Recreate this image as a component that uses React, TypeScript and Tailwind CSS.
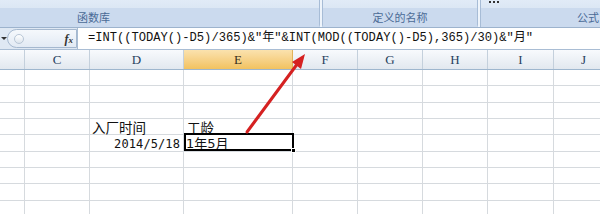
import React from "react";

const cols = [
  { name: "", w: 25 },
  { name: "C", w: 65 },
  { name: "D", w: 94 },
  { name: "E", w: 109 },
  { name: "F", w: 65 },
  { name: "G", w: 65 },
  { name: "H", w: 65 },
  { name: "I", w: 66 },
  { name: "J", w: 60 },
];
const rowH = [16, 17, 16, 16, 17, 16, 16, 17, 16];

export default function App() {
  return (
    <div className="relative w-[600px] h-[214px] overflow-hidden bg-white" style={{ fontFamily: '"Liberation Sans", "Noto Sans CJK SC", sans-serif' }}>
      {/* Ribbon */}
      <div className="flex h-[28px] bg-[#c4d5ea] border-b border-[#9db3cd]">
        <div className="w-[320px] flex flex-col bg-gradient-to-b from-[#e1ebf7] to-[#cfdcee] border-r border-[#a7bcd6] rounded-br-[3px]">
          <div className="h-[8px]" />
          <div className="flex-1 flex items-center pl-[77px] text-[11px] text-[#4a6a96] bg-[#cbdaee]" style={{ fontFamily: '"Noto Sans CJK SC", sans-serif' }}>函数库</div>
        </div>
        <div className="w-[2px] bg-[#eef4fb]" />
        <div className="w-[156px] flex flex-col bg-gradient-to-b from-[#e1ebf7] to-[#cfdcee] border-x border-[#a7bcd6] rounded-b-[3px]">
          <div className="h-[8px]" />
          <div className="flex-1 flex items-center justify-center text-[11px] text-[#4a6a96] bg-[#cbdaee]" style={{ fontFamily: '"Noto Sans CJK SC", sans-serif' }}>定义的名称</div>
        </div>
        <div className="w-[2px] bg-[#eef4fb]" />
        <div className="flex-1 flex flex-col bg-gradient-to-b from-[#e1ebf7] to-[#cfdcee] border-l border-[#a7bcd6]">
          <div className="h-[8px] flex items-start pl-[8px] gap-[2px] pt-[1px]">
            <div className="w-[2px] h-[2px] bg-[#333]" />
            <div className="w-[2px] h-[2px] bg-[#333]" />
            <div className="w-[2px] h-[2px] bg-[#333]" />
          </div>
          <div className="flex-1 flex items-center pl-[96px] text-[11px] text-[#4a6a96] bg-[#cbdaee]" style={{ fontFamily: '"Noto Sans CJK SC", sans-serif' }}>公式</div>
        </div>
      </div>

      {/* Formula bar */}
      <div className="flex h-[22px] bg-[#dfe8f3] border-b border-[#a9bdd4]">
        <div className="w-[7px] flex items-center justify-center">
          <svg width="6" height="4" viewBox="0 0 6 4"><path d="M0 0 L6 0 L3 3 Z" fill="#333" /></svg>
        </div>
        <div className="w-[70px] my-[1px] flex items-center justify-between rounded-l-[10px] border border-[#a5b8cf] bg-gradient-to-b from-[#f5f8fc] to-[#e2eaf4] pl-[6px] pr-[3px]">
          <div className="w-[10px] h-[10px] rounded-full border border-[#b8c6d6] bg-gradient-to-b from-white to-[#dde5ee]" />
          <span className="text-[12px] italic text-[#333] font-bold" style={{ fontFamily: '"Liberation Serif", serif' }}>f<span className="text-[9px]">x</span></span>
        </div>
        <div className="flex-1 bg-white border-l border-[#a9bdd4] flex items-center pl-[10px] text-[12.1px] text-[#111] whitespace-nowrap" style={{ fontFamily: '"Liberation Mono", "Noto Sans CJK SC", monospace' }}>
          =INT((TODAY()-D5)/365)&amp;″年″&amp;INT(MOD((TODAY()-D5),365)/30)&amp;″月″
        </div>
      </div>

      {/* Column headers */}
      <div className="flex h-[20px] border-b border-[#9eb6ce]">
        {cols.map((c, i) => (
          <div
            key={i}
            className={
              "shrink-0 flex items-center justify-center border-r text-[13px] " +
              (c.name === "E"
                ? "bg-gradient-to-b from-[#fbe2ae] to-[#f2c25f] border-[#e1b35a] text-[#3a3020]"
                : "bg-gradient-to-b from-[#f8fafd] to-[#e2e8ef] border-[#c4d0dc] text-[#27405e]")
            }
            style={{ width: c.w, fontFamily: '"Liberation Serif", serif' }}
          >
            {c.name}
          </div>
        ))}
      </div>

      {/* Grid */}
      <div className="flex flex-col">
        {rowH.map((h, r) => (
          <div key={r} className="flex border-b border-[#d6dade]" style={{ height: h }}>
            {cols.map((c, i) => {
              let content: React.ReactNode = null;
              let cls = "";
              if (r === 3 && c.name === "D") {
                content = <span className="pl-[2px] text-[13.5px] leading-none">入厂时间</span>;
                cls = "items-end";
              }
              if (r === 3 && c.name === "E") {
                content = <span className="pl-[3px] text-[13.5px] leading-none">工龄</span>;
                cls = "items-end";
              }
              if (r === 4 && c.name === "D") {
                content = (
                  <span className="ml-auto pr-[3px] text-[12px] leading-none" style={{ fontFamily: '"DejaVu Sans Mono", monospace', letterSpacing: "0.1px" }}>
                    2014/5/18
                  </span>
                );
                cls = "items-end pb-[1px]";
              }
              if (r === 4 && c.name === "E") {
                content = (
                  <span className="pl-[2px] text-[13px] leading-none" style={{ fontFamily: '"DejaVu Sans", "Noto Sans CJK SC", sans-serif' }}>
                    1年5月
                  </span>
                );
                cls = "items-end pb-[1px]";
              }
              return (
                <div
                  key={i}
                  className={"shrink-0 flex border-r border-[#d6dade] text-[#111] overflow-visible whitespace-nowrap " + cls}
                  style={{ width: c.w, fontFamily: '"Noto Sans CJK SC", sans-serif' }}
                >
                  {content}
                </div>
              );
            })}
          </div>
        ))}
      </div>

      {/* Selection */}
      <div className="absolute left-[184px] top-[133px] w-[110px] h-[18px] border-2 border-black pointer-events-none">
        <div className="absolute right-[-4px] bottom-[-4px] w-[5px] h-[5px] bg-black border border-white" />
      </div>

      {/* Red arrow */}
      <svg className="absolute left-0 top-0 pointer-events-none" width="600" height="214">
        <line x1="247" y1="132" x2="298" y2="63" stroke="#d52121" strokeWidth="3" strokeLinecap="round" />
        <polygon points="305,54 292,62 301,69" fill="#d52121" />
      </svg>
    </div>
  );
}
